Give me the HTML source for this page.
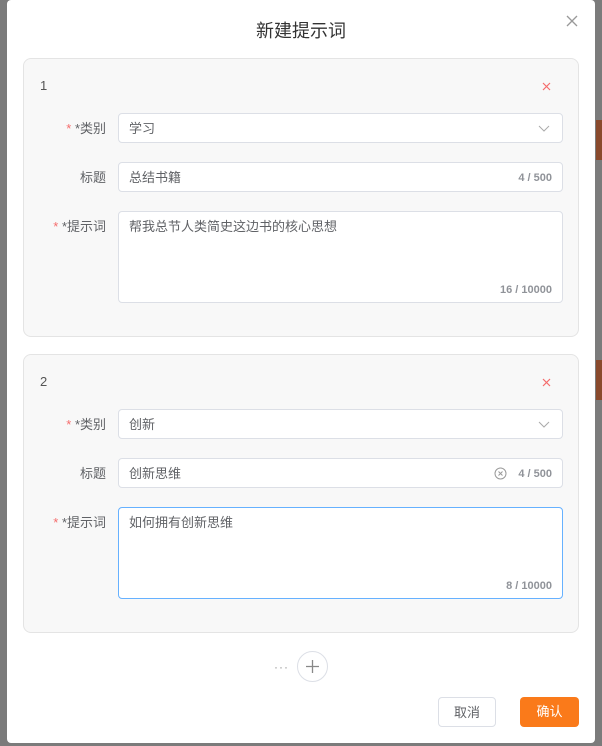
<!DOCTYPE html>
<html><head><meta charset="utf-8"><style>
*{box-sizing:border-box;margin:0;padding:0}
body{width:602px;height:746px;overflow:hidden;background:#7b7b7b;font-family:"Liberation Sans","Noto Sans CJK SC",sans-serif;position:relative}
.ab{position:absolute}
.modal{left:7px;top:0;width:588px;height:743px;background:#fff;border-radius:4px}
.title{left:0;width:588px;top:17px;text-align:center;font-size:18px;color:#333}
.card{left:16px;width:556px;height:279px;background:#f8f8f8;border:1px solid #e4e4e4;border-radius:8px}
.num{font-size:13px;color:#555}
.lbl{font-size:13px;color:#606266;text-align:right;width:82px}
.lbl .s{color:#f56c6c}
.inp{left:94px;width:445px;height:30px;background:#fff;border:1px solid #dcdfe6;border-radius:4px;font-size:13px;color:#606266;padding:7px 10px;line-height:15px}
.ta{height:92px}
.cnt{position:absolute;right:10px;font-size:11px;font-weight:bold;color:#909399}
.btn{height:30px;border-radius:4px;font-size:13px;text-align:center;line-height:30px}
</style></head><body>
<div class="ab" style="right:0;top:120px;width:6px;height:40px;background:#8a4a2c"></div>
<div class="ab" style="right:0;top:360px;width:6px;height:40px;background:#8a4a2c"></div>
<div class="ab modal">
<div class="ab title">新建提示词</div>
<svg class="ab" style="left:559px;top:15px" width="12" height="12"><path d="M1 1L11 11M11 1L1 11" stroke="#999" stroke-width="1.3"/></svg>

<div class="ab card" style="top:58px">
 <div class="ab num" style="left:16px;top:19px">1</div>
 <svg class="ab" style="left:518px;top:23px" width="9" height="9"><path d="M1 1L8 8M8 1L1 8" stroke="#f56c6c" stroke-width="1.2"/></svg>
 <div class="ab lbl" style="left:0;top:59px"><span class="s">* </span>*类别</div>
 <div class="ab inp" style="top:54px">学习<svg class="ab" style="right:12px;top:11px" width="12" height="8"><path d="M1 1L6 6L11 1" stroke="#aaa" fill="none"/></svg></div>
 <div class="ab lbl" style="left:0;top:108px">标题</div>
 <div class="ab inp" style="top:103px">总结书籍<span class="cnt" style="top:8px">4 / 500</span></div>
 <div class="ab lbl" style="left:0;top:157px"><span class="s">* </span>*提示词</div>
 <div class="ab inp ta" style="top:152px">帮我总节人类简史这边书的核心思想<span class="cnt" style="bottom:4px">16 / 10000</span></div>
</div>

<div class="ab card" style="top:354px">
 <div class="ab num" style="left:16px;top:19px">2</div>
 <svg class="ab" style="left:518px;top:23px" width="9" height="9"><path d="M1 1L8 8M8 1L1 8" stroke="#f56c6c" stroke-width="1.2"/></svg>
 <div class="ab lbl" style="left:0;top:59px"><span class="s">* </span>*类别</div>
 <div class="ab inp" style="top:54px">创新<svg class="ab" style="right:12px;top:11px" width="12" height="8"><path d="M1 1L6 6L11 1" stroke="#aaa" fill="none"/></svg></div>
 <div class="ab lbl" style="left:0;top:108px">标题</div>
 <div class="ab inp" style="top:103px">创新思维<svg class="ab" style="right:55px;top:8px" width="13" height="13"><circle cx="6.5" cy="6.5" r="5.5" stroke="#999" fill="none"/><path d="M4.5 4.5L8.5 8.5M8.5 4.5L4.5 8.5" stroke="#999"/></svg><span class="cnt" style="top:8px">4 / 500</span></div>
 <div class="ab lbl" style="left:0;top:157px"><span class="s">* </span>*提示词</div>
 <div class="ab inp ta" style="top:152px;border-color:#66b1ff">如何拥有创新思维<span class="cnt" style="bottom:4px">8 / 10000</span></div>
</div>

<div class="ab" style="left:267px;top:660px;font-size:12px;color:#999;letter-spacing:1px">···</div>
<div class="ab" style="left:290px;top:651px;width:31px;height:31px;border:1px solid #dcdfe6;border-radius:50%"><svg class="ab" style="left:7px;top:7px" width="15" height="15"><path d="M7.5 1V14M1 7.5H14" stroke="#888" stroke-width="1.3"/></svg></div>

<div class="ab btn" style="left:431px;top:697px;width:58px;border:1px solid #dcdfe6;color:#606266">取消</div>
<div class="ab btn" style="left:513px;top:697px;width:59px;background:#fa7a1a;color:#fff">确认</div>
</div>
</body></html>
